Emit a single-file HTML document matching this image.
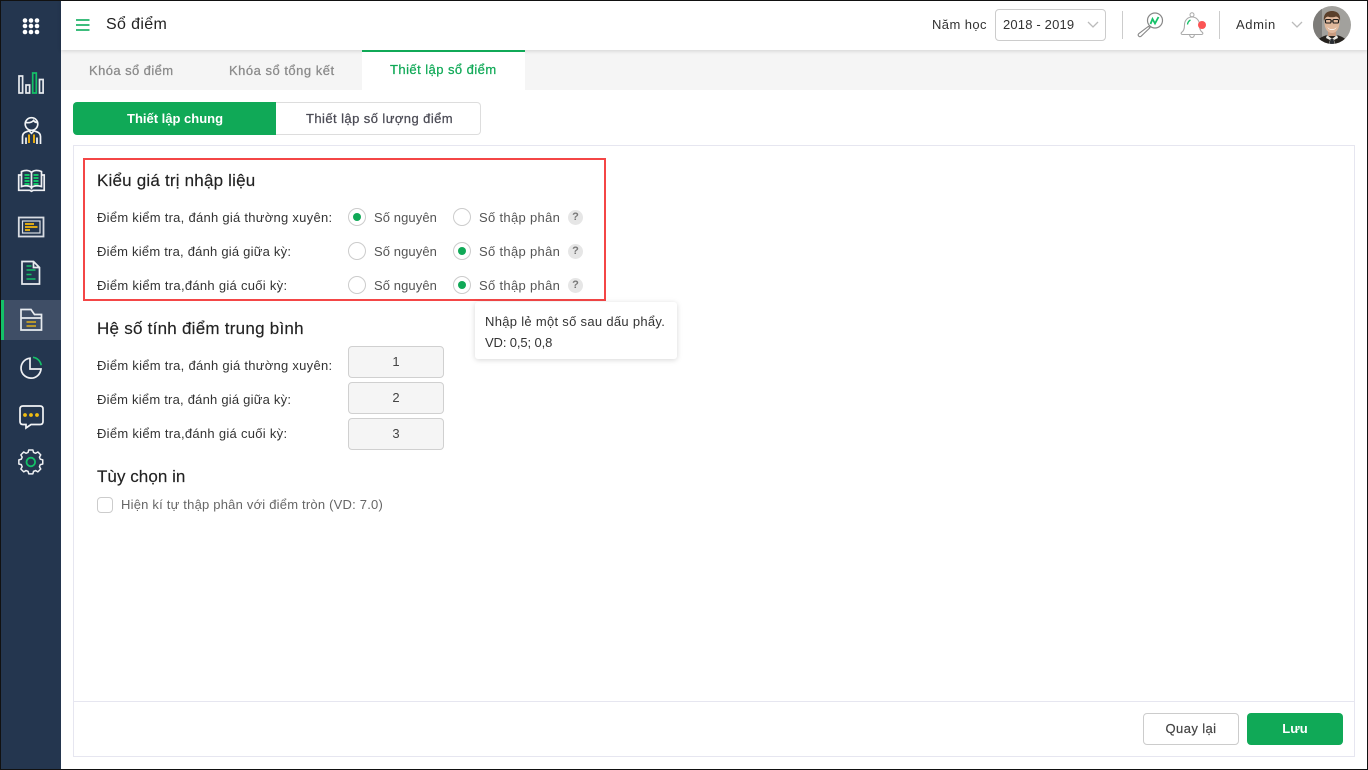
<!DOCTYPE html>
<html lang="vi"><head><meta charset="utf-8"><title>Sổ điểm</title>
<style>
html,body{margin:0;padding:0;background:#fff}
body{width:1368px;height:770px;position:relative;overflow:hidden;font-family:"Liberation Sans","Noto Sans CJK SC",sans-serif;font-size:13px;color:#333}
.a{position:absolute;box-sizing:border-box}
.t{position:absolute;white-space:nowrap;line-height:20px;height:20px;letter-spacing:.42px}
.h{font-size:17px;font-weight:400;color:#222;-webkit-text-stroke:.15px #222}
.r{position:absolute;width:18px;height:18px;border:1px solid #ccc;border-radius:50%;background:#fff;box-sizing:border-box}
.r.on::after{content:"";position:absolute;left:4px;top:4px;width:8px;height:8px;border-radius:50%;background:#10a957}
.q{position:absolute;width:15px;height:15px;border-radius:50%;background:#e6e6e6;color:#777;font-size:11px;font-weight:700;line-height:15px;text-align:center}
.inp{position:absolute;left:348px;width:96px;height:32px;background:#f5f5f5;border:1px solid #d0d0d0;border-radius:4px;box-sizing:border-box;text-align:center;line-height:30px;color:#444}
</style></head><body>

<!-- sidebar -->
<div class="a" style="left:0;top:0;width:61px;height:770px;background:#24364f"></div>
<div class="a" style="left:1px;top:300px;width:60px;height:40px;background:#3f4e66"></div>
<div class="a" style="left:1px;top:300px;width:3px;height:40px;background:#14c168"></div>

<svg class="a" style="left:0;top:0" width="61" height="490" viewBox="0 0 61 490" fill="none" stroke-width="1.7">
<g fill="#fff" stroke="none">
<circle cx="25" cy="20.500" r="2.300"/><circle cx="31" cy="20.500" r="2.300"/><circle cx="37" cy="20.500" r="2.300"/>
<circle cx="25" cy="26" r="2.300"/><circle cx="31" cy="26" r="2.300"/><circle cx="37" cy="26" r="2.300"/>
<circle cx="25" cy="32" r="2.300"/><circle cx="31" cy="32" r="2.300"/><circle cx="37" cy="32" r="2.300"/>
</g>
<!-- bars -->
<g stroke="#e8ebef"><rect x="19" y="76" width="3.600" height="17"/><rect x="26" y="85" width="3.600" height="8"/><rect x="39.500" y="79.500" width="3.600" height="13.500"/></g>
<rect x="32.700" y="73" width="3.600" height="20" stroke="#14c168"/>
<!-- person -->
<g stroke="#f2f4f6">
<circle cx="31.500" cy="124" r="6.300"/>
<path d="M25.500 122.500c3.500 .5 6.500-.2 8-2 .8 1.200 2 1.800 3.500 2"/>
<path d="M22.500 144v-7.500c0-2.800 1.500-4 4-4.800l2.500-.9 2.500 2.500 2.500-2.500 2.500 .9c2.500 .8 4 2 4 4.800v7.500"/>
<path d="M26 137.500v6.500M37 137.500v6.500"/>
</g>
<path d="M29 134.500v8.500M34 134.500v8.500" stroke="#e5ab12" stroke-width="2"/>
<!-- book -->
<g stroke="#eef0f3">
<path d="M21.500 186.500V171.500c3.500-1.500 7.500-1.500 10 .8 2.500-2.300 6.500-2.300 10-.8v15c-3.500-1-7.500-1-10 1-2.500-2-6.500-2-10-1z"/>
<path d="M21 175h-2.300v15.300h11l1.800 1 1.800-1h10.900V175H42"/>
<path d="M31.500 172.500v17"/>
</g>
<path d="M24.500 175h5M24.500 178h5M24.500 181h5M24.500 184h5M33.500 175h5M33.500 178h5M33.500 181h5M33.500 184h5" stroke="#14c168" stroke-width="2"/>
<!-- card -->
<rect x="18.800" y="217.500" width="24.700" height="19" stroke="#d8dce2" stroke-width="1.800"/>
<rect x="22.500" y="221" width="17.500" height="12" stroke="#d8dce2" stroke-width="1.200"/>
<path d="M25 224h9M25 227h12.500M25 230h5" stroke="#dca915" stroke-width="2"/>
<!-- doc -->
<path d="M22 261.500h11.500l6 6V284H22z M33.500 261.500v6h6" stroke="#e8ebef"/>
<path d="M26.500 266h5M26.500 270h9M26.500 274.500h5M26.500 279h9" stroke="#14c168" stroke-width="1.400"/>
<!-- folder -->
<path d="M21 330V309.500h10l3.500 5h7V330z" stroke="#e8ebef"/>
<path d="M21 318h20.500" stroke="#e8ebef"/>
<path d="M26.500 322h9.500M26.500 326h9.500" stroke="#e0b01c" stroke-width="1.600"/>
<!-- pie -->
<path d="M30 358.200A10 10 0 1 0 41 369H30z" stroke="#eef0f3"/>
<path d="M33 357.300a9.500 9.500 0 0 1 8.200 8" stroke="#14c168"/>
<!-- chat -->
<path d="M23 406h17c2 0 3 1.200 3 3v12.500c0 2-1 3-3 3H31l-5 3.500v-3.500h-3c-2 0-3-1-3-3V409c0-1.800 1-3 3-3z" stroke="#f2f4f6"/>
<g fill="#f0bd10" stroke="none"><circle cx="25" cy="415" r="1.900"/><circle cx="31" cy="415" r="1.900"/><circle cx="37" cy="415" r="1.900"/></g>
<!-- gear -->
<path d="M28.300 450.500h5l.8 3 2.500 1 2.700-1.600 3.500 3.500-1.600 2.700 1 2.500 3 .8v5l-3 .8-1 2.500 1.600 2.700-3.500 3.500-2.700-1.600-2.500 1-.8 3h-5l-.8-3-2.500-1-2.700 1.600-3.500-3.500 1.600-2.700-1-2.500-3-.8v-5l3-.8 1-2.500-1.600-2.700 3.500-3.500 2.700 1.600 2.500-1z" stroke="#eef0f3" stroke-width="1.800" stroke-linejoin="round" transform="translate(30.800 462) scale(.83) translate(-30.800 -465)"/>
<circle cx="30.800" cy="462" r="4.300" stroke="#14c168" stroke-width="1.800"/>
</svg>

<!-- header -->
<div class="a" style="left:61px;top:0;width:1307px;height:50px;background:#fff;box-shadow:0 1px 4px rgba(0,0,0,.14);z-index:2"></div>
<div style="position:absolute;z-index:3;left:0;top:0;width:1368px;height:50px">
<svg class="a" style="left:76px;top:19px" width="14" height="13" fill="none" stroke="#3dbd7d" stroke-width="2"><path d="M0 1h13.500M0 6h13.500M0 11h13.500"/></svg>
<span class="t" style="left:106px;top:15px;font-size:16px;color:#222;letter-spacing:.35px">Sổ điểm</span>
<span class="t" style="left:932px;top:15px;letter-spacing:.42px">Năm học</span>
<div class="a" style="left:995px;top:9px;width:111px;height:32px;border:1px solid #ccc;border-radius:4px"></div>
<span class="t" style="left:1003px;top:15px;letter-spacing:.17px">2018 - 2019</span>
<svg class="a" style="left:1087px;top:21px" width="12" height="8" fill="none" stroke="#bbb" stroke-width="1.300"><path d="M1 1l5 5 5-5"/></svg>
<div class="a" style="left:1122px;top:11px;width:1px;height:28px;background:#ccc"></div>
<svg class="a" style="left:1135px;top:8px" width="32" height="32" fill="none">
<circle cx="20" cy="12.500" r="7.500" stroke="#888" stroke-width="1.200"/>
<path d="M13.500 18.300l1.500 1.500-9 8.500c-.9 .7-1.700 .4-2.300-.2s-.8-1.400-.1-2.300z" stroke="#888" stroke-width="1.100" fill="#fff"/>
<path d="M15.500 16l2-5 2.500 4.500 3.500-6.500" stroke="#14c168" stroke-width="1.800"/>
</svg>
<svg class="a" style="left:1180px;top:11px" width="26" height="28" fill="none">
<path d="M1.500 21.500c2.500-1.500 3-4 3-7.500 0-4.500 3-8 7.500-8s7.500 3.500 7.500 8c0 3.500 .5 6 3 7.500 .8 .8 .3 2-1 2H2.500c-1.300 0-1.800-1.200-1-2z" stroke="#aaa" stroke-width="1.100"/>
<circle cx="12" cy="3.800" r="2" stroke="#aaa" stroke-width="1"/>
<path d="M9.500 23.500c.3 2 1.200 3 2.500 3s2.200-1 2.500-3" stroke="#aaa" stroke-width="1"/>
<path d="M7.500 13.500c.2-2 1.200-3.500 3-4.500" stroke="#14c168" stroke-width="1.300"/>
<circle cx="22" cy="14" r="4" fill="#fb5454"/>
</svg>
<div class="a" style="left:1219px;top:11px;width:1px;height:28px;background:#ccc"></div>
<span class="t" style="left:1236px;top:15px;letter-spacing:.6px">Admin</span>
<svg class="a" style="left:1291px;top:21px" width="12" height="8" fill="none" stroke="#bbb" stroke-width="1.300"><path d="M1 1l5 5 5-5"/></svg>
<svg class="a" style="left:1313px;top:6px" width="38" height="38" viewBox="0 0 38 38">
<defs><clipPath id="c"><circle cx="19" cy="19" r="19"/></clipPath></defs>
<g clip-path="url(#c)">
<rect width="38" height="38" fill="#a2a19d"/>
<rect width="9" height="38" fill="#7d7c79"/>
<path d="M3 38c1-5 5-7 11-9h10c6 2 10 4 11 9z" fill="#26231f"/>
<path d="M14 29l5 4 5-4 1 3-4 2 1 4h-6l1-4-4-2z" fill="#eceae4"/>
<path d="M17.500 33h3l1 5h-5z" fill="#2a2e33"/>
<rect x="15" y="22" width="8" height="8" fill="#c99c80"/>
<ellipse cx="19" cy="17" rx="7.500" ry="10" fill="#e0b89c"/>
<path d="M11 15c-1-7 3-10 8-10s9 3 8 10c-1-3-2-4-4-4.500-3 1-6 1-8 0-2 .5-3 1.500-4 4.500z" fill="#5a3f2a"/>
<rect x="12.500" y="13.500" width="5.500" height="3.500" rx="1" fill="none" stroke="#1c1a19" stroke-width="1.100"/>
<rect x="20" y="13.500" width="5.500" height="3.500" rx="1" fill="none" stroke="#1c1a19" stroke-width="1.100"/>
<path d="M18 15h2" stroke="#1c1a19"/>
<path d="M14.500 21c2 3 7 3 9 0-1 4-8 4-9 0z" fill="#fff"/>
</g></svg>
</div>

<!-- tabs -->
<div class="a" style="left:61px;top:50px;width:1307px;height:40px;background:#f5f5f5"></div>
<div class="a" style="left:362px;top:50px;width:163px;height:40px;background:#fff;border-top:2px solid #10a957;z-index:3"></div>
<span class="t" style="left:89px;top:61px;color:#8a8a8a;letter-spacing:.42px;-webkit-text-stroke:.25px #8a8a8a;z-index:3">Khóa sổ điểm</span>
<span class="t" style="left:229px;top:61px;color:#8a8a8a;letter-spacing:.5px;-webkit-text-stroke:.25px #8a8a8a;z-index:3">Khóa sổ tổng kết</span>
<span class="t" style="left:390px;top:60px;color:#10a957;letter-spacing:.45px;-webkit-text-stroke:.25px #10a957;z-index:3">Thiết lập sổ điểm</span>

<!-- pill -->
<div class="a" style="left:276px;top:102px;width:205px;height:33px;background:#fff;border:1px solid #ddd;border-left:none;border-radius:0 4px 4px 0"></div>
<div class="a" style="left:73px;top:102px;width:203px;height:33px;background:#10a957;border-radius:4px 0 0 4px"></div>
<span class="t" style="left:127px;top:109px;color:#fff;font-weight:700;letter-spacing:0">Thiết lập chung</span>
<span class="t" style="left:306px;top:109px;color:#4b4b55;letter-spacing:.43px;-webkit-text-stroke:.25px #4b4b55">Thiết lập số lượng điểm</span>

<!-- box -->
<div class="a" style="left:73px;top:145px;width:1282px;height:612px;border:1px solid #e6e6f0;background:#fff"></div>
<div class="a" style="left:74px;top:701px;width:1280px;height:1px;background:#e6e6f0"></div>
<div class="a" style="left:83px;top:158px;width:523px;height:143px;border:2px solid #f44646"></div>

<span class="t h" style="left:97px;top:171px;letter-spacing:.2px">Kiểu giá trị nhập liệu</span>
<span class="t" style="left:97px;top:208px;letter-spacing:.27px">Điểm kiểm tra, đánh giá thường xuyên:</span>
<span class="t" style="left:97px;top:242px;letter-spacing:.22px">Điểm kiểm tra, đánh giá giữa kỳ:</span>
<span class="t" style="left:97px;top:276px;letter-spacing:.29px">Điểm kiểm tra,đánh giá cuối kỳ:</span>

<div class="r on" style="left:348px;top:208px"></div><span class="t" style="left:374px;top:208px;color:#555;letter-spacing:.09px">Số nguyên</span>
<div class="r" style="left:453px;top:208px"></div><span class="t" style="left:479px;top:208px;color:#555;letter-spacing:.32px">Số thập phân</span><div class="q" style="left:568px;top:210px">?</div>
<div class="r" style="left:348px;top:242px"></div><span class="t" style="left:374px;top:242px;color:#555;letter-spacing:.09px">Số nguyên</span>
<div class="r on" style="left:453px;top:242px"></div><span class="t" style="left:479px;top:242px;color:#555;letter-spacing:.32px">Số thập phân</span><div class="q" style="left:568px;top:244px">?</div>
<div class="r" style="left:348px;top:276px"></div><span class="t" style="left:374px;top:276px;color:#555;letter-spacing:.09px">Số nguyên</span>
<div class="r on" style="left:453px;top:276px"></div><span class="t" style="left:479px;top:276px;color:#555;letter-spacing:.32px">Số thập phân</span><div class="q" style="left:568px;top:278px">?</div>

<!-- tooltip -->
<div class="a" style="left:475px;top:302px;width:202px;height:57px;background:#fff;border-radius:3px;box-shadow:0 1px 6px rgba(0,0,0,.16)"></div>
<span class="t" style="left:485px;top:312px;letter-spacing:.3px">Nhập lẻ một số sau dấu phẩy.</span>
<span class="t" style="left:485px;top:333px;letter-spacing:-.12px">VD: 0,5; 0,8</span>

<span class="t h" style="left:97px;top:319px;letter-spacing:.25px">Hệ số tính điểm trung bình</span>
<span class="t" style="left:97px;top:356px;letter-spacing:.27px">Điểm kiểm tra, đánh giá thường xuyên:</span>
<span class="t" style="left:97px;top:390px;letter-spacing:.22px">Điểm kiểm tra, đánh giá giữa kỳ:</span>
<span class="t" style="left:97px;top:424px;letter-spacing:.29px">Điểm kiểm tra,đánh giá cuối kỳ:</span>
<div class="inp" style="top:346px">1</div>
<div class="inp" style="top:382px">2</div>
<div class="inp" style="top:418px">3</div>

<span class="t h" style="left:97px;top:467px;letter-spacing:.05px">Tùy chọn in</span>
<div class="a" style="left:97px;top:497px;width:16px;height:16px;border:1px solid #ccc;border-radius:4px;background:#fff"></div>
<span class="t" style="left:121px;top:495px;color:#666;letter-spacing:.21px">Hiện kí tự thập phân với điểm tròn (VD: 7.0)</span>

<!-- footer buttons -->
<div class="a" style="left:1143px;top:713px;width:96px;height:32px;background:#fff;border:1px solid #ccc;border-radius:4px;text-align:center;line-height:30px;color:#444;letter-spacing:.4px;-webkit-text-stroke:.2px #444">Quay lại</div>
<div class="a" style="left:1247px;top:713px;width:96px;height:32px;background:#10a957;border-radius:4px;text-align:center;line-height:32px;color:#fff;font-weight:700;letter-spacing:.1px">Lưu</div>

<!-- screenshot frame -->
<div class="a" style="left:0;top:0;width:1368px;height:770px;border:1px solid #111;z-index:9;pointer-events:none"></div>
</body></html>
